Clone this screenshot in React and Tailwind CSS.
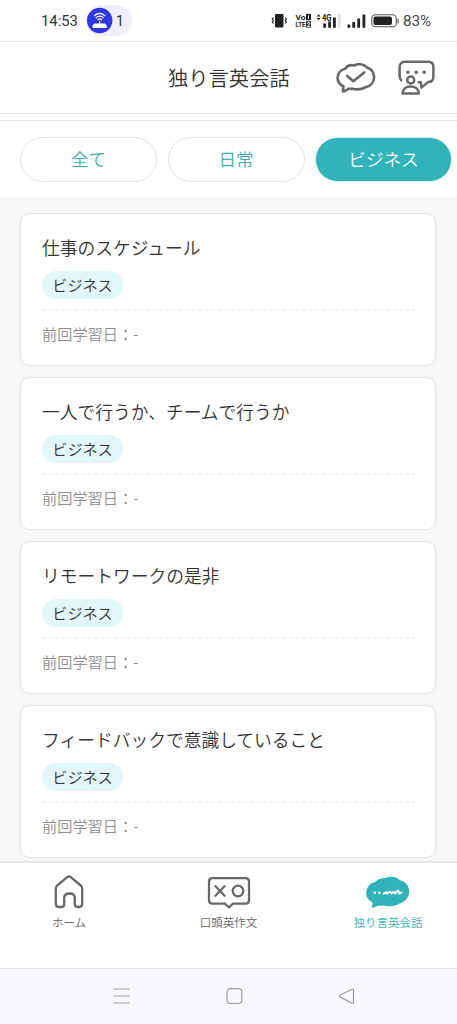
import React, { useState } from 'react'

const lessons = [
  { id: 1, title: "仕事のスケジュール", tag: "ビジネス", lastStudied: "-" },
  { id: 2, title: "一人で行うか、チームで行うか", tag: "ビジネス", lastStudied: "-" },
  { id: 3, title: "リモートワークの是非", tag: "ビジネス", lastStudied: "-" },
  { id: 4, title: "フィードバックで意識していること", tag: "ビジネス", lastStudied: "-" },
];

const categories = ["全て", "日常", "ビジネス"];

const App = () => {
  const [category, setCategory] = useState("ビジネス");

  return (
    <div className="flex h-[1024px] w-[457px] flex-col overflow-hidden bg-white font-['Noto_Sans_CJK_JP',sans-serif] text-[#333]">
      <StatusBar />
      <Header />

      {/* Category filter */}
      <div className="mt-[6px] flex h-[77px] shrink-0 gap-[10.5px] border-t border-[#e4e4e4] pt-[16px] pl-[20px]">
        {categories.map((item) => (
          <button
            key={item}
            onClick={() => setCategory(item)}
            className={`flex h-[45px] w-[137px] shrink-0 cursor-pointer items-center justify-center rounded-full border pb-px text-[17.6px] leading-none font-[350] ${
              item === category
                ? "border-[#d9eff0] bg-[#30b3b9] text-white"
                : "border-[#e3e3e3] bg-white text-[#3fafb4]"
            }`}
          >
            {item}
          </button>
        ))}
      </div>

      {/* Lesson list */}
      <main className="flex min-h-0 flex-1 flex-col gap-[11px] overflow-hidden bg-[#f8f8f8] pt-[16px] pr-[20px] pl-[20px]">
        {lessons.map((lesson) => (
          <LessonCard key={lesson.id} lesson={lesson} />
        ))}
      </main>

      <TabBar />
      <SystemBar />
    </div>
  );
};

export default App;

const StatusBar = () => {
  return (
    <div className="flex h-[42px] shrink-0 items-center border-b border-[#e4e4e4] pl-[41px] font-[Roboto,sans-serif] text-[#333]">
      <span className="w-[37px] pt-[2px] text-[14.8px] leading-none">14:53</span>
      <div className="ml-[8px] flex h-[31px] w-[46px] items-center rounded-full bg-[#eeeefc]">
        <svg width="27" height="27" viewBox="0 0 27 27" fill="none">
          <circle cx="13.7" cy="13.5" r="12.7" fill="#3039e0" />
          <path d="M8.5 8.700q5.200-4.600 10.400 0M10.200 10.700q3.500-3 7 0M11.800 12.700q1.900-1.500 3.800 0" stroke="#fff" strokeWidth="1.2" strokeLinecap="round" />
          <path d="M13.7 14v3" stroke="#fff" strokeWidth="1.2" />
          <path d="M8.5 16.4h10.4l1.9 2.2v2.300H6.600v-2.300z" fill="#fff" />
        </svg>
        <span className="ml-[3px] text-[14px] leading-none">1</span>
      </div>

      {/* vibrate */}
      <svg className="ml-[139px]" width="17" height="16" viewBox="0 0 17 16" fill="none">
        <rect x="4" y="1" width="8.500" height="13.500" rx="1" fill="#222" />
        <path d="M2.4 4.500 1.2 6 2.400 7.500 1.200 9 2.400 10.500M14.200 4.500l1.200 1.500-1.200 1.500 1.200 1.500-1.200 1.500" stroke="#222" strokeWidth="1.2" />
      </svg>

      {/* VoLTE */}
      <svg className="ml-[7px]" width="18" height="16" viewBox="0 0 18 16" fill="#222">
        <text x=".5" y="7" fontSize="8" fontWeight="700" textLength="10" lengthAdjust="spacingAndGlyphs">Vo</text>
        <text x=".5" y="14.300" fontSize="8" fontWeight="700" textLength="10" lengthAdjust="spacingAndGlyphs">LTE</text>
        <rect x="11" y=".8" width="5" height="6.400" />
        <rect x="11" y="8.200" width="5" height="6.400" />
        <path d="M13 2.300h1v3.400h-1z" fill="#fff" />
        <text x="11.800" y="13.800" fontSize="6.500" fontWeight="700" fill="#fff">2</text>
      </svg>

      {/* 4G signal */}
      <svg className="ml-[3px]" width="26" height="16" viewBox="0 0 26 16" fill="#222">
        <path d="M.6 3.500 2.6 1.300 4.6 3.500zM.6 5h4L2.6 7.200z" />
        <text x="6" y="7.6" fontSize="8.500" fontWeight="700" textLength="9.500" lengthAdjust="spacingAndGlyphs">4G</text>
        <path d="M7.300 10.500h2.800v4.200H7.300zM12.200 8.600h2.800v6.100h-2.800zM17 4.500h2.800v10.200H17z" />
        <path d="M22 1h2.600v13.700H22z" fill="#e0e0e0" />
      </svg>
      <svg className="ml-[5px]" width="19" height="16" viewBox="0 0 19 16" fill="#222">
        <path d="M.5 11.500h2.800v3.200H.5zM5.300 9h2.800v5.700H5.300zM10.300 5.500h2.800v9.200h-2.800zM15.500 1.500h2.800v13.200h-2.800z" />
      </svg>
      <svg className="ml-[5px]" width="28" height="14" viewBox="0 0 28 14" fill="none">
        <rect x=".8" y=".8" width="24.500" height="12" rx="3.800" stroke="#555" strokeWidth="1.1" />
        <rect x="2.500" y="2.500" width="18.500" height="8.600" rx="2" fill="#222" />
        <path d="M27 5v3.800" stroke="#555" strokeWidth="1.200" strokeLinecap="round" />
      </svg>
      <span className="ml-[4px] pt-[2px] text-[15.200px] leading-none text-[#444]">83%</span>
    </div>
  );
};

const Header = () => {
  return (
    <header className="flex h-[72px] shrink-0 items-center border-b border-[#e0e0e0] pl-[168px]">
      <h1 className="w-[122px] pb-px text-[20.3px] leading-none font-[350] whitespace-nowrap">独り言英会話</h1>

      <svg className="ml-[46px]" width="40" height="36" viewBox="0 0 40 36" fill="none" stroke="#686868" strokeWidth="2.700" strokeLinecap="round" strokeLinejoin="round">
        <path d="M7 31.500 7.400 26.400C3.800 24.600 1.600 21.800 1.600 17.800c0-4.400 3-8 7.600-9.100C11.400 5.600 15 4.700 18.200 5.500c3.800-2.300 9.300-1.600 12.400 1.700 4.700 1.600 7.500 5.500 7.500 10 0 5.200-3.800 9.200-9 10.300-3.500 1.900-8.200 2.300-12.200 1.200-1.400.3-2.700.3-4 .1C11 29.600 9.400 31 7 31.500z" />
        <path d="M11.200 15.900 17.300 21.300 28.300 12.500" />
      </svg>

      <svg className="ml-[22px]" width="38" height="36" viewBox="0 0 38 36" fill="none" stroke="#686868" strokeWidth="2.500" strokeLinecap="round" strokeLinejoin="round">
        <path d="M3.200 20.300C2.100 19.400 1.600 17.600 1.600 15.500V7c0-3.300 2.200-5.200 5.200-5.200h23.400c3.200 0 5.200 2.100 5.200 5.200v9.500c0 3.600-2.200 5.600-5.400 5.600L23.500 27.600 22.800 22.200h-2" />
        <circle cx="12.700" cy="20" r="3.500" />
        <path d="M4.600 33.500c0-4.400 3.200-6.900 8.100-6.900s8.100 2.500 8.100 6.900z" />
        <path d="M9.900 12.200h.1M18.200 12.200h.1M26.100 12.200h.1" strokeWidth="3.600" />
      </svg>
    </header>
  );
};

const LessonCard = ({ lesson }) => {
  return (
    <div className="h-[153px] w-[416px] shrink-0 rounded-[10px] border border-[#e4e4e4] bg-white px-[21px] pt-[23px] shadow-[0_0_3px_rgba(0,0,0,0.05)]">
      <h2 className="text-[17.750px] leading-[20px] font-[350] whitespace-nowrap">{lesson.title}</h2>
      <span className="mt-[14px] flex h-[28px] w-[81px] items-center justify-center rounded-full bg-[#e2f7f9] pb-px text-[15.100px] leading-none font-[350]">
        {lesson.tag}
      </span>
      <Divider />
      <p className="mt-[12px] text-[15.200px] leading-[20px] font-[350] text-[#8f8f8f]">
        前回学習日：{lesson.lastStudied}
      </p>
    </div>
  );
};

const Divider = () => {
  return (
    <svg className="mt-[10px] block" width="373" height="2" viewBox="0 0 373 2">
      <path d="M0 1h373" stroke="#ededed" strokeWidth="1.500" strokeDasharray="4 2.500" />
    </svg>
  );
};

const TabBar = () => {
  return (
    <nav className="flex h-[107px] shrink-0 justify-between border-t-2 border-[#e9e9e9] pt-[11px] pr-[19px] pl-[19px] text-[#666]">
      <TabItem label="ホーム">
        <svg width="44" height="36" viewBox="0 0 44 36" fill="none" stroke="#686868" strokeWidth="2.300" strokeLinejoin="round">
          <path d="M20.200 3.200q1.800-1.500 3.600 0l10 8.300q1.400 1.300 1.400 3v15.300q0 3.200-3.200 3.200h-1.600q-2.600 0-2.600-2.700V24q0-4.500-5.300-4.500T17.200 24v6.300q0 2.700-2.600 2.700H12q-3.200 0-3.200-3.200V14.500q0-1.700 1.400-3z" />
        </svg>
      </TabItem>
      <TabItem label="口頭英作文">
        <svg width="44" height="36" viewBox="0 0 44 36" fill="none" stroke="#686868" strokeWidth="2.300" strokeLinecap="round" strokeLinejoin="round">
          <path d="M5.500 4.200h33q3.500 0 3.500 3.500v18.500q0 3.500-3.500 3.500H26l-4 3.800-4-3.800H5.500Q2 29.700 2 26.200V7.700q0-3.500 3.500-3.500z" />
          <path d="m8.500 12.300 9 9.500M17.500 12.300l-9 9.500" />
          <circle cx="31" cy="17" r="5.300" />
        </svg>
      </TabItem>
      <TabItem label="独り言英会話" active>
        <svg width="44" height="36" viewBox="0 0 44 36" fill="none">
          <path d="M5.800 34 6.600 28.500C2.500 26.600.2 23.200.2 19c0-5.600 3.700-9.900 9.300-11.300C12.100 4.700 16 3.700 19.500 4c4.800-2.300 11-1.500 14 1.900 5.900 1.500 9.700 5.700 9.700 11.400 0 6.300-4.200 10.800-10.200 12.400-4.200 2.600-10.600 3.400-15.600 1.900-1.900.2-3.600.2-5.200-.1-1.500 1.400-3.600 2-6.400 2.500z" fill="#30b3b9" />
          <path d="M8.800 18.800h.1M13.200 18.800h.1" stroke="#fff" strokeWidth="2.500" strokeLinecap="round" />
          <path d="M17.700 19.600c2-1.500 3-2 3.300 0 2.200-1.600 3.600-2.400 4.100 0 2-1.800 3.600-2.500 3.900 0 1.600-2.200 3.500-4.600 3.700-1.300.1 2.300 1.400 1.300 2.800 0" stroke="#fff" strokeWidth="2" strokeLinecap="round" strokeLinejoin="round" />
        </svg>
      </TabItem>
    </nav>
  );
};

const TabItem = ({ label, active, children }) => {
  return (
    <div className={`flex w-[100px] flex-col items-center ${active ? "text-[#3fb3b8]" : ""}`}>
      {children}
      <span className="mt-[4px] text-[11.500px] leading-[16px] font-[350] whitespace-nowrap">{label}</span>
    </div>
  );
};

// Android navigation buttons
const SystemBar = () => {
  return (
    <div className="flex h-[56px] shrink-0 items-center justify-between border-t border-[#e2e2e8] bg-[#f8f8ff] pr-[102px] pb-[2px] pl-[113px]">
      <svg width="17" height="18" viewBox="0 0 17 18" fill="none" stroke="#9c9ca4" strokeWidth="1.200">
        <path d="M.5 2h16M.5 9h16M.5 16h16" />
      </svg>
      <svg width="17" height="18" viewBox="0 0 17 18" fill="none" stroke="#9c9ca4" strokeWidth="1.200">
        <rect x="1" y="1.700" width="14.800" height="14.800" rx="3" />
      </svg>
      <svg width="17" height="18" viewBox="0 0 17 18" fill="none" stroke="#9c9ca4" strokeWidth="1.200" strokeLinejoin="round">
        <path d="M1.900 8.200 13.800 2.300q1.700-.7 1.700 1v12q0 1.700-1.700 1L1.900 9.900q-1.200-.8 0-1.700z" />
      </svg>
    </div>
  );
};
